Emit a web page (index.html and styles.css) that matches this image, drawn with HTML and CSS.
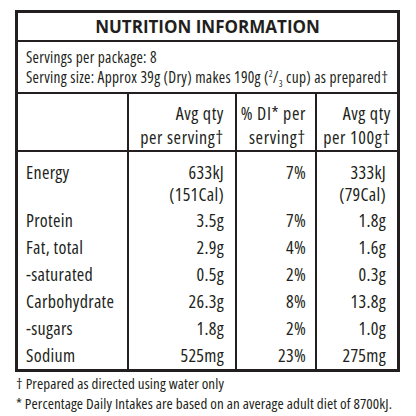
FILE: index.html
```html
<!doctype html>
<html lang="en">
  <head>
    <meta charset="UTF-8" />
    <meta name="viewport" content="width=device-width, initial-scale=1.0" />
    <title>Nutrition Information</title>
    <link rel="stylesheet" href="styles.css">
  </head>
  <body>
    <div class="panel">
      <div class="title">NUTRITION INFORMATION</div>
      <div class="servings">
        <div>Servings per package: 8</div>
        <div>Serving size: Approx 39g (Dry) makes 190g (<sup>2</sup>/<sub>3</sub> cup) as prepared†</div>
      </div>
      <table class="facts">
        <colgroup>
          <col class="c-name" />
          <col class="c-serve" />
          <col class="c-di" />
          <col class="c-100" />
        </colgroup>
        <thead>
          <tr>
            <th></th>
            <th>Avg qty<br />per serving†</th>
            <th>% DI* per<br />serving†</th>
            <th>Avg qty<br />per 100g†</th>
          </tr>
        </thead>
        <tbody>
          <tr class="first">
            <td>Energy</td>
            <td>633kJ<br />(151Cal)</td>
            <td>7%</td>
            <td>333kJ<br />(79Cal)</td>
          </tr>
          <tr>
            <td>Protein</td>
            <td>3.5g</td>
            <td>7%</td>
            <td>1.8g</td>
          </tr>
          <tr>
            <td>Fat, total</td>
            <td>2.9g</td>
            <td>4%</td>
            <td>1.6g</td>
          </tr>
          <tr>
            <td>-saturated</td>
            <td>0.5g</td>
            <td>2%</td>
            <td>0.3g</td>
          </tr>
          <tr>
            <td>Carbohydrate</td>
            <td>26.3g</td>
            <td>8%</td>
            <td>13.8g</td>
          </tr>
          <tr>
            <td>-sugars</td>
            <td>1.8g</td>
            <td>2%</td>
            <td>1.0g</td>
          </tr>
          <tr>
            <td>Sodium</td>
            <td>525mg</td>
            <td>23%</td>
            <td>275mg</td>
          </tr>
        </tbody>
      </table>
    </div>
    <div class="notes">
      <div>† Prepared as directed using water only</div>
      <div>* Percentage Daily Intakes are based on an average adult diet of 8700kJ.</div>
    </div>
  </body>
</html>
```

FILE: styles.css
```css
body {
  font-family: "Open Sans", sans-serif;
  font-stretch: condensed;
  font-weight: 500;
  color: #231f20;
  background: #fff;
  margin: 0;
  padding: 10px 16px 0 15px;
}
.panel {
  border: 3px solid #231f20;
  width: 379px;
}
.title {
  font-weight: bold;
  font-size: 17px;
  font-stretch: normal;
  text-align: center;
  line-height: 27px;
  border-bottom: 2px solid #231f20;
}
.servings {
  font-size: 15.4px;
  letter-spacing: 0.3px;
  line-height: 20px;
  padding: 6px 8px 4px;
  white-space: nowrap;
  border-bottom: 2px solid #231f20;
}
.servings sup,
.servings sub {
  font-size: 9px;
  line-height: 0;
}
.facts {
  width: 100%;
  table-layout: fixed;
  border-collapse: collapse;
  font-size: 18px;
  letter-spacing: 0.3px;
  white-space: nowrap;
}
.c-name {
  width: 110px;
}
.c-serve {
  width: 108px;
}
.c-di {
  width: 80px;
}
.facts th {
  font-weight: 500;
  text-align: right;
  letter-spacing: 0.6px;
  line-height: 24px;
  padding: 7px 11px 1px 0;
  border-bottom: 2px solid #231f20;
  border-left: 2px solid #231f20;
}
.facts th:first-child {
  border-left: none;
}
.facts th:nth-child(3) {
  padding-right: 9px;
}
.facts th:nth-child(4) {
  padding-right: 6px;
}
.facts td {
  text-align: right;
  line-height: 27px;
  padding: 0 11px 0 0;
  border-left: 2px solid #231f20;
  vertical-align: top;
}
.facts td:first-child {
  text-align: left;
  border-left: none;
  padding-left: 8px;
}
.facts td:nth-child(3) {
  padding-right: 9px;
}
.facts td:nth-child(4) {
  padding-right: 11px;
}
.facts tr.first td {
  line-height: 22px;
  padding-top: 9px;
  padding-bottom: 2px;
}
.notes {
  font-size: 15px;
  letter-spacing: 0.1px;
  line-height: 20px;
  padding: 1px 0 0 1px;
}
```
